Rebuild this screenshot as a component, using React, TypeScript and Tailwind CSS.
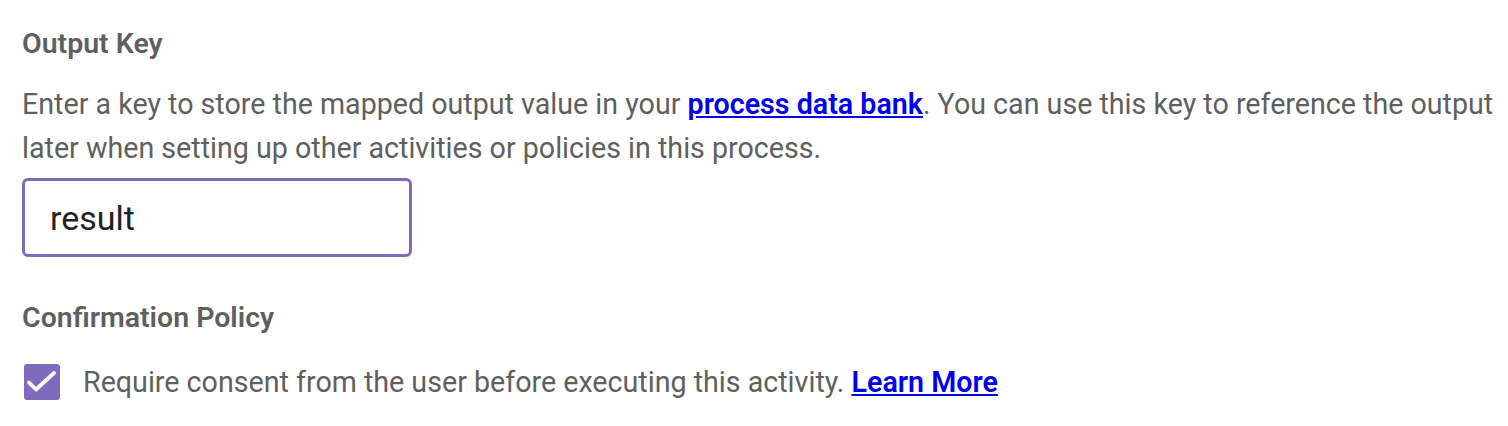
export default function App() {
  return (
    <div className="min-h-screen bg-white px-[22px] pt-[28px] font-['Roboto',sans-serif] text-[#5f5f5f]">
      <h2 className="m-0 text-[28.5px] font-semibold leading-[32px]">Output Key</h2>
      <p className="mt-[22px] mb-0 w-[1480px] text-[28.65px] leading-[44px]">
        Enter a key to store the mapped output value in your{" "}
        <a href="#" className="font-semibold text-[#0000ee] underline">
          process data bank
        </a>
        . You can use this key to reference the output later when setting up other activities or policies in this process.
      </p>
      <input
        type="text"
        defaultValue="result"
        className="mt-[8px] block h-[79px] w-[390px] rounded-[6px] border-[3px] border-[#7e6bbd] px-[25px] text-[34px] text-[#222] outline-none"
      />
      <h2 className="m-0 mt-[45px] text-[28.5px] font-semibold leading-[32px]">Confirmation Policy</h2>
      <label className="mt-[30px] flex items-center gap-[23px] pl-[2px] text-[28.65px] leading-[36px]">
        <span className="block h-[36px] w-[36px] shrink-0 rounded-[3px] bg-[#7e6bbd]">
          <svg width="36" height="36" viewBox="0 0 36 36" fill="none" stroke="white" strokeWidth="3.8" strokeLinecap="round" strokeLinejoin="round">
            <path d="M5 18.5l7 7L30 9" />
          </svg>
        </span>
        <span>
          Require consent from the user before executing this activity.{" "}
          <a href="#" className="font-semibold text-[#0000ee] underline">
            Learn More
          </a>
        </span>
      </label>
    </div>
  );
}
